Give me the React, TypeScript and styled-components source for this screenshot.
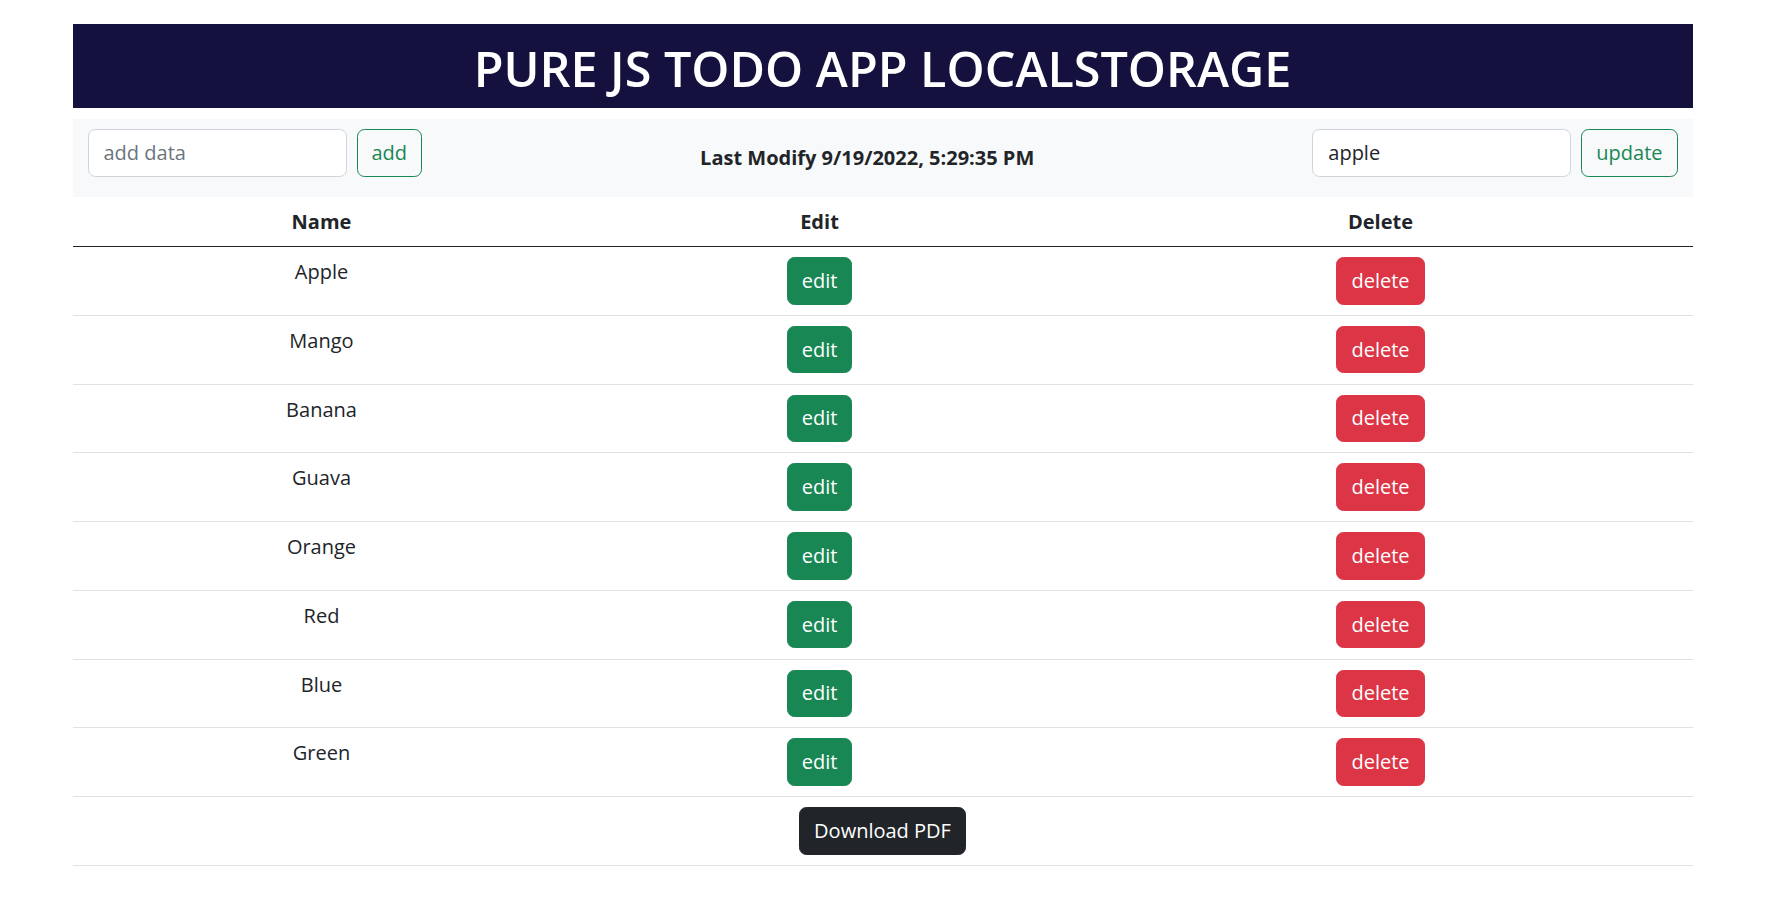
import React from "react";
import styled, { createGlobalStyle } from "styled-components";

const GlobalStyle = createGlobalStyle`
  html, body { margin: 0; padding: 0; background: #ffffff; }
  body {
    font-family: "Segoe UI", "Open Sans", "Noto Sans", sans-serif;
    color: #212529;
    font-size: 20px;
    line-height: 1.5;
  }
  *, *::before, *::after { box-sizing: border-box; }
`;

const Page = styled.div`
  width: 1620px;
  margin: 0 auto;
  padding-top: 24px;
`;

const Banner = styled.header`
  height: 84px;
  background: #15113f;
  display: flex;
  align-items: center;
  justify-content: center;
  margin-bottom: 11px;
`;

const Title = styled.h1`
  margin: 0;
  padding-top: 4px;
  color: #ffffff;
  font-size: 48.5px;
  font-weight: 600;
  line-height: 1.2;
`;

const Toolbar = styled.nav`
  background: #f8f9fa;
  padding: 10px 15px;
  display: flex;
  align-items: center;
  justify-content: space-between;
`;

const InlineForm = styled.form`
  display: flex;
  gap: 10px;
  margin-bottom: 10px;
`;

const TextInput = styled.input`
  width: 259px;
  height: 47.5px;
  padding: 7.5px 15px;
  font: inherit;
  font-size: 20px;
  color: #212529;
  background: #ffffff;
  border: 1px solid #ced4da;
  border-radius: 7.5px;
  outline: none;
  &::placeholder { color: #6c757d; }
`;

const OutlineButton = styled.button`
  height: 47.5px;
  padding: 0 14px;
  font: inherit;
  font-size: 20px;
  color: #198754;
  background: transparent;
  border: 1px solid #198754;
  border-radius: 7.5px;
  cursor: pointer;
`;

const Stamp = styled.h6`
  margin: 0;
  font-size: 20px;
  font-weight: 700;
  line-height: 1.2;
`;

const Table = styled.table`
  width: 100%;
  border-collapse: collapse;
  table-layout: fixed;
`;

const HeadCell = styled.th`
  padding: 10px 10px 9.5px;
  font-weight: 700;
  text-align: center;
  line-height: 30px;
  border-bottom: 1px solid #212529;
`;

const Cell = styled.td`
  padding: 10px 10px 10.25px;
  text-align: center;
  vertical-align: top;
  line-height: 30px;
  border-bottom: 1px solid #dee2e6;
`;

const palette = {
  success: "#198754",
  danger: "#dc3545",
  dark: "#212529",
} as const;

const SolidButton = styled.button<{ $variant: keyof typeof palette }>`
  height: 47.5px;
  padding: 0 14px;
  font: inherit;
  font-size: 20px;
  line-height: 30px;
  color: #ffffff;
  background: ${(p) => palette[p.$variant]};
  border: 1px solid ${(p) => palette[p.$variant]};
  border-radius: 7.5px;
  cursor: pointer;
`;

const fruits = ["Apple", "Mango", "Banana", "Guava", "Orange", "Red", "Blue", "Green"];

export default function App() {
  return (
    <>
      <GlobalStyle />
      <Page>
        <Banner>
          <Title>PURE JS TODO APP LOCALSTORAGE</Title>
        </Banner>
        <Toolbar>
          <InlineForm onSubmit={(e) => e.preventDefault()}>
            <TextInput placeholder="add data" />
            <OutlineButton type="submit">add</OutlineButton>
          </InlineForm>
          <Stamp>Last Modify 9/19/2022, 5:29:35 PM</Stamp>
          <InlineForm onSubmit={(e) => e.preventDefault()}>
            <TextInput defaultValue="apple" />
            <OutlineButton type="submit">update</OutlineButton>
          </InlineForm>
        </Toolbar>
        <Table>
          <colgroup>
            <col style={{ width: 498 }} />
            <col style={{ width: 498 }} />
            <col />
          </colgroup>
          <thead>
            <tr>
              <HeadCell>Name</HeadCell>
              <HeadCell>Edit</HeadCell>
              <HeadCell>Delete</HeadCell>
            </tr>
          </thead>
          <tbody>
            {fruits.map((f) => (
              <tr key={f}>
                <Cell>{f}</Cell>
                <Cell>
                  <SolidButton $variant="success">edit</SolidButton>
                </Cell>
                <Cell>
                  <SolidButton $variant="danger">delete</SolidButton>
                </Cell>
              </tr>
            ))}
            <tr>
              <Cell colSpan={3}>
                <SolidButton $variant="dark">Download PDF</SolidButton>
              </Cell>
            </tr>
          </tbody>
        </Table>
      </Page>
    </>
  );
}
